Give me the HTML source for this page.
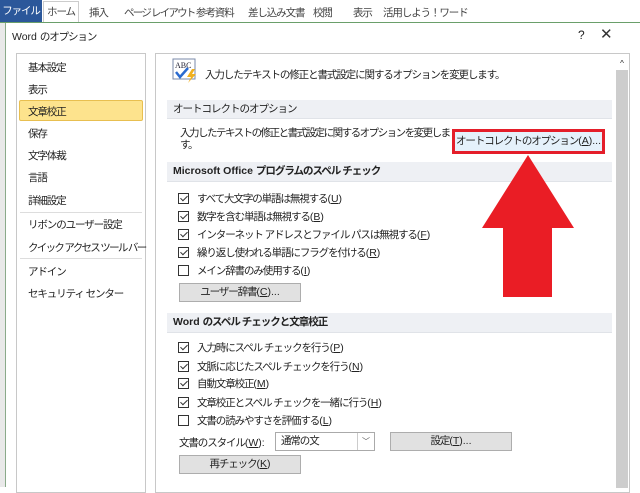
<!DOCTYPE html>
<html><head><meta charset="utf-8"><style>
*{margin:0;padding:0;box-sizing:border-box}
body{width:640px;height:487px;overflow:hidden;background:#fff;font-family:"Liberation Sans","Noto Sans CJK JP",sans-serif;font-size:10.5px;letter-spacing:-1.1px;color:#222;position:relative}
.a{position:absolute;white-space:nowrap}
.l{letter-spacing:0}
.hdr{position:absolute;left:167px;width:445px;background:#eef0f4;border-bottom:1px solid #e0e3e8;font-weight:bold;padding-left:6px;letter-spacing:-1px}
.cb{position:absolute;left:178px;width:11px;height:11px;border:1px solid #333;background:#fff}
.cb.c::after{content:"";position:absolute;left:3px;top:0px;width:3px;height:6px;border:solid #333;border-width:0 1.3px 1.3px 0;transform:rotate(45deg)}
.lb{position:absolute;left:197px;white-space:nowrap}
.btn{position:absolute;background:#e1e1e1;border:1px solid #adadad;text-align:center}
.li{position:absolute;left:28px;white-space:nowrap}
u{text-decoration:underline;letter-spacing:0}
</style></head><body>
<div class="a" style="left:0;top:0;width:42px;height:22px;background:#2b579a;color:#fff;line-height:22px;text-align:center">ファイル</div>
<div class="a" style="left:43px;top:1px;width:36px;height:22px;border:1px solid #ccc;border-bottom:none;line-height:20px;text-align:center;color:#444">ホーム</div>
<div class="a" style="left:89px;top:5px;color:#444">挿入</div>
<div class="a" style="left:124px;top:5px;color:#444;letter-spacing:-1.8px">ページ レイアウト</div>
<div class="a" style="left:196px;top:5px;color:#444">参考資料</div>
<div class="a" style="left:248px;top:5px;color:#444">差し込み文書</div>
<div class="a" style="left:313px;top:5px;color:#444">校閲</div>
<div class="a" style="left:353px;top:5px;color:#444">表示</div>
<div class="a" style="left:383px;top:5px;color:#444">活用しよう！ワード</div>
<div class="a" style="left:0;top:22px;width:640px;height:1px;background:#6a9f6a"></div>
<div class="a" style="left:0;top:23px;width:6px;height:464px;background:#e9e9e9;border-right:1px solid #8aaa8a"></div>
<div class="a" style="left:6px;top:23px;width:634px;height:464px;background:#fff"></div>
<div class="a" style="left:12px;top:29px"><span class="l">Word </span>のオプション</div>
<div class="a" style="left:578px;top:28px;font-size:12px">?</div>
<div class="a" style="left:600px;top:25px;font-size:15px;color:#333">✕</div>
<div class="a" style="left:16px;top:53px;width:130px;height:440px;border:1px solid #c8c8c8"></div>
<div class="li" style="top:60px">基本設定</div>
<div class="li" style="top:82px">表示</div>
<div class="a" style="left:19px;top:100px;width:124px;height:21px;background:#fde38d;border:1px solid #e8bf50;border-radius:2px"></div>
<div class="li" style="top:104px">文章校正</div>
<div class="li" style="top:126px">保存</div>
<div class="li" style="top:148px">文字体裁</div>
<div class="li" style="top:170px">言語</div>
<div class="li" style="top:193px">詳細設定</div>
<div class="a" style="left:20px;top:212px;width:122px;height:1px;background:#ddd"></div>
<div class="li" style="top:217px">リボンのユーザー設定</div>
<div class="li" style="top:240px;letter-spacing:-1.7px">クイック アクセス ツール バー</div>
<div class="a" style="left:20px;top:258px;width:122px;height:1px;background:#ddd"></div>
<div class="li" style="top:264px">アドイン</div>
<div class="li" style="top:286px">セキュリティ センター</div>
<div class="a" style="left:155px;top:53px;width:475px;height:440px;border:1px solid #c8c8c8"></div>
<div class="a" style="left:616px;top:58px;width:12px;height:430px;background:#cdcdcd"></div>
<div class="a" style="left:616px;top:58px;width:12px;height:12px;background:#fff;font-size:8px;text-align:center;line-height:12px;letter-spacing:0">^</div>
<svg class="a" style="left:172px;top:58px" width="28" height="26"><rect x="1" y="1" width="22" height="20" fill="#fff" stroke="#7a8aa8"/><text x="3" y="10" font-size="8" font-family="Liberation Serif" fill="#223" letter-spacing="0">ABC</text><path d="M4 14 L8 19 L16 10" stroke="#2a6ad0" stroke-width="2.5" fill="none"/><path d="M20 11 L15 19 L19 19 L16 25 L24 16 L20 16 L23 11Z" fill="#f0b020"/></svg>
<div class="a" style="left:205px;top:67px">入力したテキストの修正と書式設定に関するオプションを変更します。</div>
<div class="hdr" style="top:100px;height:19px;line-height:18px;font-weight:normal">オートコレクトのオプション</div>
<div class="a" style="left:180px;top:127px;line-height:12px;letter-spacing:-1.5px">入力したテキストの修正と書式設定に関するオプションを変更しま<br>す。</div>
<div class="a" style="left:452px;top:129px;width:153px;height:25px;border:3px solid #e41e2a;background:#e5f1fb;text-align:center;line-height:19px">オートコレクトのオプション<span class="l">(<u>A</u>)...</span></div>
<div class="hdr" style="top:162px;height:20px;line-height:19px"><span class="l">Microsoft Office </span>プログラムのスペル チェック</div>
<div class="cb c" style="top:193px"></div><div class="lb" style="top:191px">すべて大文字の単語は無視する<span class="l">(<u>U</u>)</span></div>
<div class="cb c" style="top:211px"></div><div class="lb" style="top:209px">数字を含む単語は無視する<span class="l">(<u>B</u>)</span></div>
<div class="cb c" style="top:229px"></div><div class="lb" style="top:227px">インターネット アドレスとファイル パスは無視する<span class="l">(<u>F</u>)</span></div>
<div class="cb c" style="top:247px"></div><div class="lb" style="top:245px">繰り返し使われる単語にフラグを付ける<span class="l">(<u>R</u>)</span></div>
<div class="cb" style="top:265px"></div><div class="lb" style="top:263px">メイン辞書のみ使用する<span class="l">(<u>I</u>)</span></div>
<div class="btn" style="left:179px;top:283px;width:122px;height:19px;line-height:17px">ユーザー辞書<span class="l">(<u>C</u>)...</span></div>
<div class="hdr" style="top:313px;height:20px;line-height:19px"><span class="l">Word </span>のスペル チェックと文章校正</div>
<div class="cb c" style="top:342px"></div><div class="lb" style="top:340px">入力時にスペル チェックを行う<span class="l">(<u>P</u>)</span></div>
<div class="cb c" style="top:361px"></div><div class="lb" style="top:359px">文脈に応じたスペル チェックを行う<span class="l">(<u>N</u>)</span></div>
<div class="cb c" style="top:378px"></div><div class="lb" style="top:376px">自動文章校正<span class="l">(<u>M</u>)</span></div>
<div class="cb c" style="top:397px"></div><div class="lb" style="top:395px">文章校正とスペル チェックを一緒に行う<span class="l">(<u>H</u>)</span></div>
<div class="cb" style="top:415px"></div><div class="lb" style="top:413px">文書の読みやすさを評価する<span class="l">(<u>L</u>)</span></div>
<div class="a" style="left:179px;top:435px">文書のスタイル<span class="l">(<u>W</u>):</span></div>
<div class="a" style="left:275px;top:432px;width:100px;height:19px;border:1px solid #aaa;padding-left:5px;line-height:17px">通常の文</div>
<div class="a" style="left:357px;top:433px;width:17px;height:17px;border-left:1px solid #ccc;font-size:8px;text-align:center;line-height:17px;color:#555;letter-spacing:0">﹀</div>
<div class="btn" style="left:390px;top:432px;width:122px;height:19px;line-height:17px">設定<span class="l">(<u>T</u>)...</span></div>
<div class="btn" style="left:179px;top:455px;width:122px;height:19px;line-height:17px">再チェック<span class="l">(<u>K</u>)</span></div>
<svg class="a" style="left:480px;top:150px" width="100" height="150"><polygon points="48,5 94,78 72,78 72,147 23,147 23,78 2,78" fill="#ea1d25"/></svg>
</body></html>
